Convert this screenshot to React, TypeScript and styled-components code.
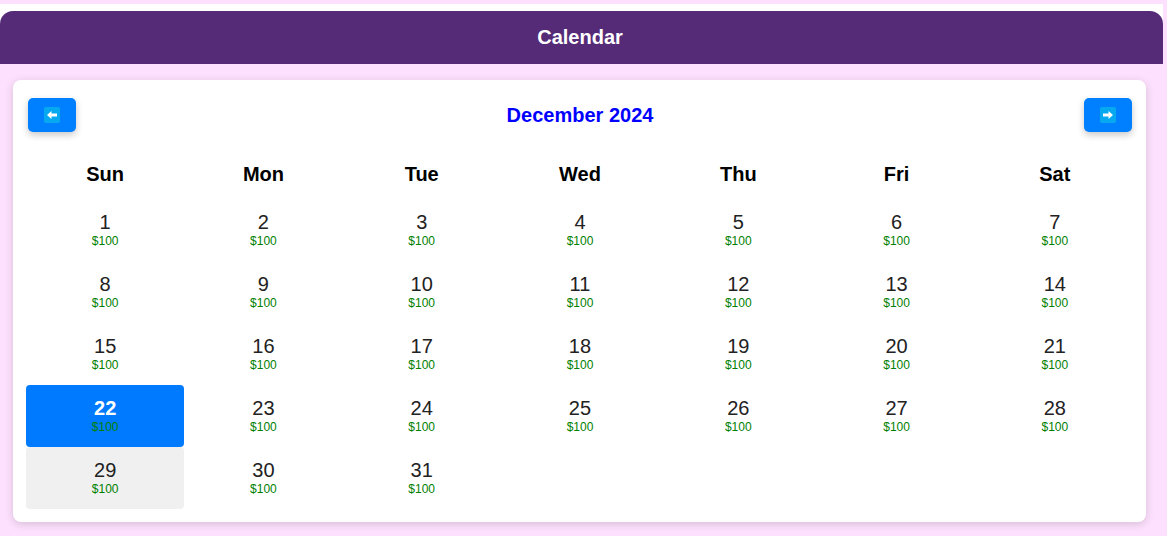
import React from "react";
import styled, { createGlobalStyle } from "styled-components";

const Global = createGlobalStyle`
  html, body { margin: 0; padding: 0; background: #fde0fd; }
  body { font-family: "Liberation Sans", Arial, sans-serif; }
`;

const Page = styled.div`
  padding-top: 4px;
  padding-right: 4px;
`;

const Shell = styled.div`
  background: #ffffff;
  padding-top: 7px;
`;

const Header = styled.header`
  height: 53px;
  background: #552a77;
  border-radius: 13px 13px 0 0;
  display: flex;
  align-items: center;
  justify-content: center;
  color: #ffffff;
  font-weight: 700;
  font-size: 20px;
  padding-right: 3px;
`;

const Body = styled.main`
  background: #fde0fd;
  padding: 16px 17px 15px 13px;
`;

const Card = styled.section`
  background: #ffffff;
  border-radius: 8px;
  box-shadow: 0 2px 8px rgba(0, 0, 0, 0.16);
  padding: 18px 12px 13px 13px;
`;

const TopRow = styled.div`
  display: flex;
  align-items: center;
  justify-content: space-between;
  margin: 0 2px;
  height: 34px;
`;

const NavButton = styled.button`
  width: 48px;
  height: 34px;
  border: none;
  border-radius: 5px;
  background: #0080ff;
  box-shadow: 0 3px 7px rgba(0, 0, 0, 0.22);
  display: flex;
  align-items: center;
  justify-content: center;
  padding: 0;
  cursor: pointer;
`;

const Title = styled.h2`
  margin: 0;
  font-size: 20px;
  font-weight: 700;
  color: #0000ff;
`;

const Grid = styled.div`
  display: grid;
  grid-template-columns: repeat(7, 1fr);
`;

const WeekHead = styled.div`
  height: 50px;
  margin-top: 17px;
  display: flex;
  align-items: center;
  justify-content: center;
  font-weight: 700;
  font-size: 20px;
  color: #000;
`;

const Cell = styled.div<{ $selected?: boolean; $muted?: boolean }>`
  height: 62px;
  box-sizing: border-box;
  padding-top: 12px;
  border-radius: 4px;
  display: flex;
  flex-direction: column;
  align-items: center;
  background: ${(p) => (p.$selected ? "#007bff" : p.$muted ? "#f0f0f0" : "transparent")};
`;

const DayNum = styled.span<{ $selected?: boolean }>`
  font-size: 20px;
  line-height: 23px;
  color: ${(p) => (p.$selected ? "#ffffff" : "#222222")};
  font-weight: ${(p) => (p.$selected ? 700 : 400)};
`;

const Price = styled.span`
  font-size: 12px;
  line-height: 14px;
  color: #008000;
`;

const Arrow = ({ dir }: { dir: "left" | "right" }) => (
  <svg width="16" height="16" viewBox="0 0 16 16">
    <rect x="0" y="0" width="16" height="16" rx="2" fill="#06a8f0" />
    {dir === "left" ? (
      <path d="M3 8 L7.5 4 L7.5 6.6 L13 6.6 L13 9.4 L7.5 9.4 L7.5 12 Z" fill="#fff" />
    ) : (
      <path d="M13 8 L8.5 4 L8.5 6.6 L3 6.6 L3 9.4 L8.5 9.4 L8.5 12 Z" fill="#fff" />
    )}
  </svg>
);

const days = ["Sun", "Mon", "Tue", "Wed", "Thu", "Fri", "Sat"];

export default function App() {
  const cells = Array.from({ length: 31 }, (_, i) => i + 1);
  return (
    <>
      <Global />
      <Page>
        <Shell>
          <Header>Calendar</Header>
          <Body>
            <Card>
              <TopRow>
                <NavButton aria-label="previous">
                  <Arrow dir="left" />
                </NavButton>
                <Title>December 2024</Title>
                <NavButton aria-label="next">
                  <Arrow dir="right" />
                </NavButton>
              </TopRow>
              <Grid>
                {days.map((d) => (
                  <WeekHead key={d}>{d}</WeekHead>
                ))}
                {cells.map((n) => (
                  <Cell key={n} $selected={n === 22} $muted={n === 29}>
                    <DayNum $selected={n === 22}>{n}</DayNum>
                    <Price>$100</Price>
                  </Cell>
                ))}
              </Grid>
            </Card>
          </Body>
        </Shell>
      </Page>
    </>
  );
}
